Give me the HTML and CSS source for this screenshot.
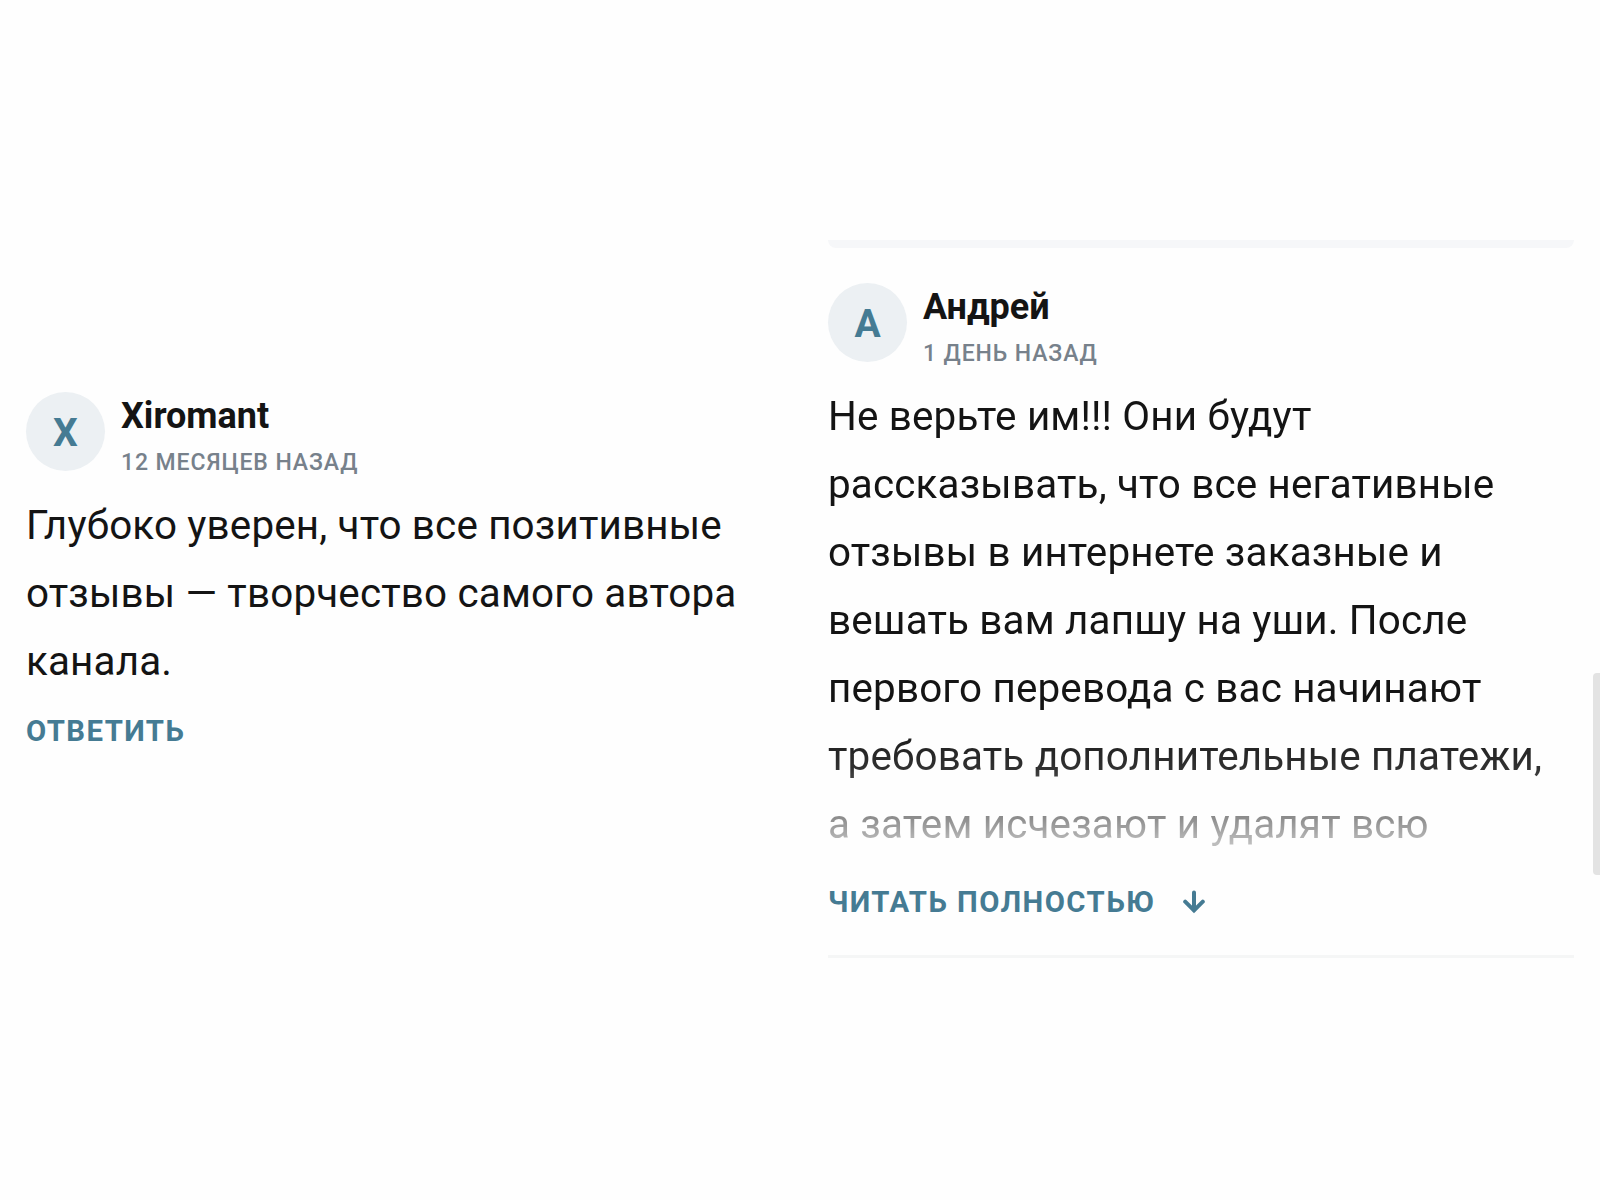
FILE: index.html
```
<!DOCTYPE html>
<html lang="ru">
<head>
	<meta charset="utf-8">
	<title>Отзывы</title>
	<link rel="stylesheet" href="styles.css">
</head>
<body>
	<div class="page">
		<div class="column column_left">
			<div class="comment">
				<div class="comment_head">
					<div class="avatar">X</div>
					<div class="author">
						<div class="name">Xiromant</div>
						<div class="date">12 месяцев назад</div>
					</div>
				</div>
				<div class="comment_text">Глубоко уверен, что все позитивные<br>отзывы — творчество самого автора<br>канала.</div>
				<a class="link reply">Ответить</a>
			</div>
		</div>
		<div class="column column_right">
			<div class="bar"></div>
			<div class="comment">
				<div class="comment_head">
					<div class="avatar">А</div>
					<div class="author">
						<div class="name">Андрей</div>
						<div class="date">1 день назад</div>
					</div>
				</div>
				<div class="comment_text comment_text_cut">Не верьте им!!! Они будут<br>рассказывать, что все негативные<br>отзывы в интернете заказные и<br>вешать вам лапшу на уши. После<br>первого перевода с вас начинают<br>требовать дополнительные платежи,<br>а затем исчезают и удалят всю</div>
				<a class="link more">Читать полностью
					<svg class="arrow" width="22" height="24" viewBox="0 0 22 24"><path d="M11 2.5v18M2.2 11.7l8.8 8.8 8.8-8.8"/></svg>
				</a>
			</div>
			<div class="scroll"></div>
		</div>
	</div>
</body>
</html>
```

FILE: styles.css
```
*{
	margin: 0;
	padding: 0;
	box-sizing: border-box;
}
body{
	background: #fefefe;
	font-family: Roboto, "Liberation Sans", sans-serif;
	color: #141414;
}
.page{
	display: flex;
	width: 1600px;
	height: 1200px;
	overflow: hidden;
}
.column{
	width: 800px;
}
.column_left{
	padding: 391.7px 0 0 26px;
}
.column_right{
	position: relative;
	padding: 240px 26px 0 28px;
}
.bar{
	height: 8px;
	margin-bottom: 35px;
	background: #f6f7f9;
	border-radius: 0 0 8px 8px;
}
.comment_head{
	display: flex;
	gap: 16px;
	height: 79px;
}
.avatar{
	width: 79px;
	height: 79px;
	border-radius: 50%;
	background: #ecf0f3;
	color: #457b93;
	font-size: 39px;
	font-weight: 700;
	line-height: 83px;
	text-align: center;
}
.name{
	height: 49px;
	padding-top: 3px;
	font-size: 36px;
	font-weight: 700;
	line-height: 43px;
	white-space: nowrap;
}
.date{
	color: #77818b;
	font-size: 23px;
	font-weight: 500;
	line-height: 44px;
	letter-spacing: .9px;
	text-transform: uppercase;
	white-space: nowrap;
}
.comment_text{
	margin-top: 21.2px;
	font-size: 40.4px;
	line-height: 67.9px;
	letter-spacing: .16px;
	white-space: nowrap;
}
/* last line fades out under the "read more" link */
.comment_text_cut{
	-webkit-mask-image: linear-gradient(#000 340px, rgba(0,0,0,.88) 385px, rgba(0,0,0,.28) 460px);
	mask-image: linear-gradient(#000 340px, rgba(0,0,0,.88) 385px, rgba(0,0,0,.28) 460px);
}
.link{
	display: flex;
	align-items: center;
	color: #457b93;
	font-size: 29.3px;
	font-weight: 700;
	line-height: 40px;
	letter-spacing: 1.45px;
	text-transform: uppercase;
	white-space: nowrap;
}
.reply{
	margin-top: 15.6px;
}
.more{
	gap: 28px;
	margin-top: 23.5px;
	padding-bottom: 33px;
	border-bottom: 3px solid #f5f6f6;
}
.arrow{
	fill: none;
	stroke: #457b93;
	stroke-width: 4;
	stroke-linecap: round;
}
.scroll{
	position: absolute;
	top: 673px;
	right: 0;
	width: 7px;
	height: 202px;
	background: #e3e3e3;
	border-radius: 4px 0 0 4px;
}
```
